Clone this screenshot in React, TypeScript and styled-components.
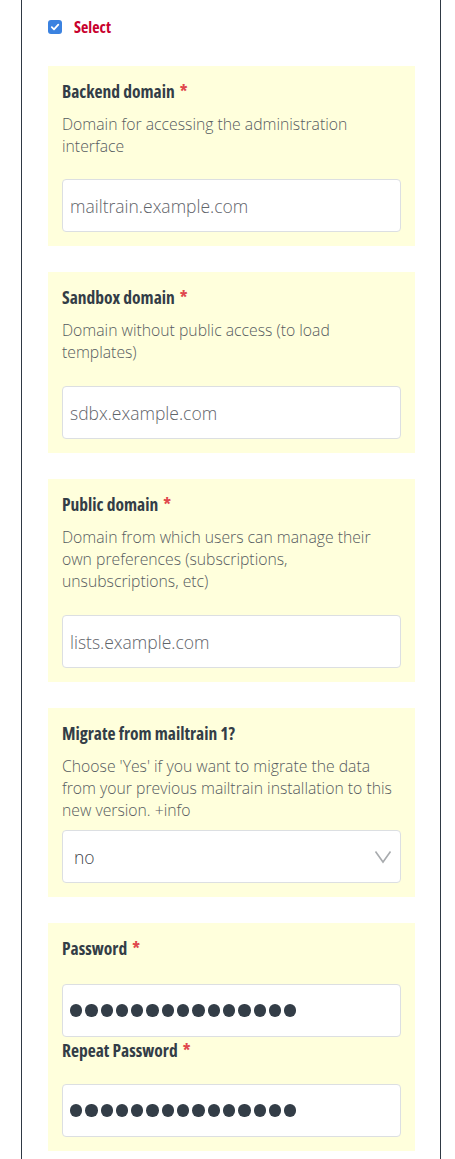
import React from "react";
import styled, { createGlobalStyle } from "styled-components";

const Global = createGlobalStyle`
  html, body { margin: 0; padding: 0; background: #fff; }
  body { font-family: "Open Sans", "Liberation Sans", sans-serif; }
  * { box-sizing: border-box; }
`;

const Frame = styled.div`
  margin-left: 21px;
  width: 420px;
  min-height: 1159px;
  border-left: 1px solid #2f3944;
  border-right: 1px solid #2f3944;
  padding: 20px 25px 0 26px;
`;

const CheckRow = styled.label`
  display: flex;
  align-items: center;
  gap: 12px;
  height: 14px;
  margin-bottom: 32px;
`;

const CheckBox = styled.span`
  width: 14px;
  height: 14px;
  border-radius: 3px;
  background: #3b82e0;
  display: flex;
  align-items: center;
  justify-content: center;
`;

const SelectText = styled.span`
  font-family: "Open Sans", sans-serif;
  font-stretch: 75%;
  font-weight: 700;
  font-size: 16px;
  color: #c8002d;
  line-height: 14px;
`;

const Panel = styled.section`
  background: #ffffdc;
  padding: 14px;
  margin-bottom: 26px;
  display: flex;
  flex-direction: column;
`;

const Label = styled.div<{ $gap: number }>`
  font-family: "Open Sans", sans-serif;
  font-stretch: 75%;
  font-weight: 700;
  font-size: 17.5px;
  line-height: 22px;
  color: #333d47;
  margin-bottom: ${(p) => p.$gap}px;
`;

const Star = styled.span`
  color: #e0474c;
  margin-left: 5px;
`;

const Help = styled.div<{ $gap: number }>`
  font-size: 15.75px;
  font-weight: 300;
  line-height: 22px;
  color: #565b60;
  margin-bottom: ${(p) => p.$gap}px;
`;

const Field = styled.div`
  height: 53px;
  border: 1px solid #dcdfe2;
  border-radius: 4px;
  background: #fff;
  display: flex;
  align-items: center;
  padding: 0 7px;
  font-size: 17.5px;
  font-weight: 300;
  color: #5f646a;
`;

const SelectField = styled(Field)`
  padding-left: 11px;
  padding-right: 8px;
  color: #3f454b;
  justify-content: space-between;
`;

const Dots = styled.div`
  display: flex;
  gap: 3px;
`;

const Dot = styled.span`
  width: 12.3px;
  height: 12.3px;
  border-radius: 50%;
  background: #333d47;
`;

const Spacer = styled.div<{ $h: number }>`
  height: ${(p) => p.$h}px;
`;

function Required({ children }: { children: React.ReactNode }) {
  return (
    <>
      {children}
      <Star>*</Star>
    </>
  );
}

function PasswordField() {
  return (
    <Field>
      <Dots>
        {Array.from({ length: 15 }).map((_, i) => (
          <Dot key={i} />
        ))}
      </Dots>
    </Field>
  );
}

export default function App() {
  return (
    <>
      <Global />
      <Frame>
        <CheckRow>
          <CheckBox>
            <svg width="10" height="10" viewBox="0 0 10 10">
              <path d="M1.8 5.2 L4 7.3 L8.3 2.6" stroke="#fff" strokeWidth="1.8" fill="none" strokeLinecap="round" strokeLinejoin="round" />
            </svg>
          </CheckBox>
          <SelectText>Select</SelectText>
        </CheckRow>

        <Panel>
          <Label $gap={11}>
            <Required>Backend domain</Required>
          </Label>
          <Help $gap={22}>Domain for accessing the administration interface</Help>
          <Field>mailtrain.example.com</Field>
        </Panel>

        <Panel>
          <Label $gap={11}>
            <Required>Sandbox domain</Required>
          </Label>
          <Help $gap={23}>Domain without public access (to load templates)</Help>
          <Field>sdbx.example.com</Field>
        </Panel>

        <Panel>
          <Label $gap={11}>
            <Required>Public domain</Required>
          </Label>
          <Help $gap={23}>Domain from which users can manage their own preferences (subscriptions, unsubscriptions, etc)</Help>
          <Field>lists.example.com</Field>
        </Panel>

        <Panel>
          <Label $gap={11}>Migrate from mailtrain 1?</Label>
          <Help $gap={9}>
            Choose 'Yes' if you want to migrate the data from your previous mailtrain installation to this new version. +info
          </Help>
          <SelectField>
            <span>no</span>
            <svg width="18" height="14" viewBox="0 0 18 14">
              <path d="M1.5 1.5 L9 12 L16.5 1.5" stroke="#a8abae" strokeWidth="1.6" fill="none" />
            </svg>
          </SelectField>
        </Panel>

        <Panel>
          <Label $gap={25}>
            <Required>Password</Required>
          </Label>
          <PasswordField />
          <Spacer $h={2} />
          <Label $gap={23}>
            <Required>Repeat Password</Required>
          </Label>
          <PasswordField />
        </Panel>
      </Frame>
    </>
  );
}
